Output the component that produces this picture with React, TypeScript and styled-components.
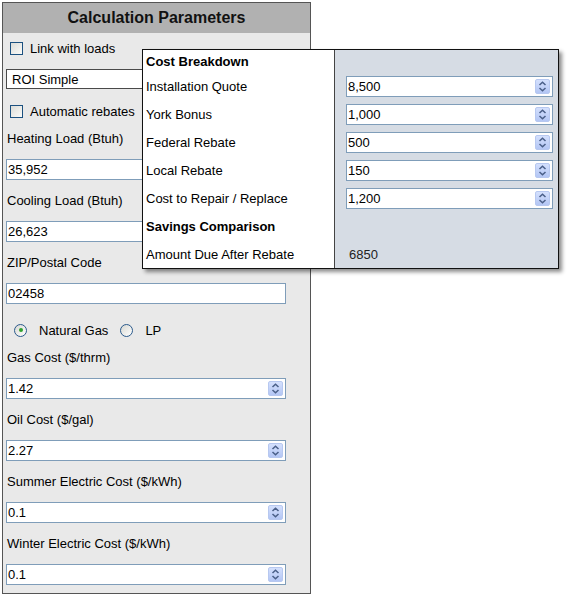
import { Fragment } from 'react';
import styled, { createGlobalStyle } from 'styled-components';

const GlobalStyle = createGlobalStyle`
  body {
    margin: 0;
    background: #fff;
    font-family: "Liberation Sans", Arial, sans-serif;
    font-size: 13px;
    color: #000;
  }
`;

const Page = styled.div`
  position: relative;
  width: 568px;
  height: 597px;
  overflow: hidden;
`;

const ParamsPanel = styled.div`
  margin: 2px 0 0 2px;
  width: 309px;
  box-sizing: border-box;
  border: 1px solid #555;
  background: #e9e9e9;
`;

const PanelHeader = styled.div`
  height: 30px;
  background: #b1b1b1;
  display: flex;
  align-items: center;
  justify-content: center;
  font-size: 16px;
  font-weight: bold;
  color: #111;
`;

const PanelBody = styled.div`
  padding: 0 3px;
`;

const CheckRow = styled.label<{ $height: number; $top?: number }>`
  display: flex;
  align-items: center;
  height: ${(p) => p.$height}px;
  margin-top: ${(p) => p.$top || 0}px;
  padding-left: 4px;
  gap: 7px;
`;

const CheckBox = styled.span`
  width: 13px;
  height: 13px;
  box-sizing: border-box;
  border: 1px solid #1c5180;
  background: linear-gradient(135deg, #dcdcd7, #fbfbf9);
`;

const SelectBox = styled.div`
  margin-top: 5px;
  width: 280px;
  height: 20px;
  box-sizing: border-box;
  border: 1px solid #4a4a4a;
  background: #fff;
  display: flex;
  align-items: center;
  padding-left: 5px;
`;

const Spacer = styled.div`
  height: 3px;
`;

const Field = styled.div`
  margin-bottom: 11px;
  &:last-child {
    margin-bottom: 8px;
  }
`;

const FieldLabel = styled.div`
  height: 20px;
  line-height: 20px;
  margin-bottom: 10px;
  padding-left: 1px;
`;

const NumberBox = styled.div<{ $width: number }>`
  display: flex;
  align-items: center;
  width: ${(p) => p.$width}px;
  height: 21px;
  box-sizing: border-box;
  border: 1px solid #7f9db9;
  background: #fff;
  padding-right: 2px;
`;

const NumberInput = styled.input`
  flex: 1;
  min-width: 0;
  height: 100%;
  border: none;
  outline: none;
  background: transparent;
  padding: 0 0 0 1px;
  font: inherit;
  color: #000;
`;

const SpinButton = styled.span`
  display: flex;
  align-items: center;
  justify-content: center;
  width: 15px;
  height: 15px;
  box-sizing: border-box;
  border: 1px solid #b7c8f0;
  border-radius: 2px;
  background: linear-gradient(#d4e0fd, #b3c6f4);
`;

const RadioRow = styled.div`
  display: flex;
  align-items: center;
  height: 30px;
  margin-bottom: 3px;
  padding-left: 8px;
`;

const Radio = styled.span<{ $checked?: boolean }>`
  position: relative;
  width: 13px;
  height: 13px;
  box-sizing: border-box;
  border-radius: 50%;
  border: 1px solid #2a5a8c;
  background: linear-gradient(135deg, #d8d8d2, #ffffff);
  margin-right: 12px;
  &::after {
    content: '';
    display: ${(p) => (p.$checked ? 'block' : 'none')};
    position: absolute;
    left: 3.5px;
    top: 3.5px;
    width: 4px;
    height: 4px;
    border-radius: 50%;
    background: #2fa12f;
  }
`;

const RadioLabel = styled.span`
  margin-right: 12px;
`;

/* floating cost breakdown sheet */
const Breakdown = styled.div`
  position: absolute;
  left: 142px;
  top: 49px;
  width: 417px;
  height: 220px;
  box-sizing: border-box;
  border: 1px solid #111;
  background: #d6dce4;
  box-shadow: 3px 3px 4px rgba(0, 0, 0, 0.45);
  display: grid;
  grid-template-columns: 191px 1fr;
  grid-template-rows: 22px repeat(6, 28px) 1fr;
`;

const NameCell = styled.div<{ $bold?: boolean }>`
  background: #fff;
  display: flex;
  align-items: center;
  padding-left: 3px;
  font-weight: ${(p) => (p.$bold ? 'bold' : 'normal')};
`;

const ValueCell = styled.div<{ $inset?: number }>`
  border-left: 1px solid #444;
  display: flex;
  align-items: center;
  padding-left: ${(p) => p.$inset ?? 11}px;
  color: #222;
`;

const Spinner = () => (
  <SpinButton>
    <svg width="9" height="11" viewBox="0 0 9 11">
      <path d="M1.5 4 L4.5 1.2 L7.5 4" fill="none" stroke="#4a5f88" strokeWidth="1.5" />
      <path d="M1.5 7 L4.5 9.8 L7.5 7" fill="none" stroke="#4a5f88" strokeWidth="1.5" />
    </svg>
  </SpinButton>
);

const NumberField = ({ value, width, spin = true }: { value: string; width: number; spin?: boolean }) => (
  <NumberBox $width={width}>
    <NumberInput readOnly value={value} />
    {spin && <Spinner />}
  </NumberBox>
);

const panelFields = [
  { label: 'Heating Load (Btuh)', value: '35,952' },
  { label: 'Cooling Load (Btuh)', value: '26,623' },
  { label: 'ZIP/Postal Code', value: '02458', spin: false },
];

const costFields = [
  { label: 'Gas Cost ($/thrm)', value: '1.42' },
  { label: 'Oil Cost ($/gal)', value: '2.27' },
  { label: 'Summer Electric Cost ($/kWh)', value: '0.1' },
  { label: 'Winter Electric Cost ($/kWh)', value: '0.1' },
];

const breakdown = [
  { label: 'Installation Quote', value: '8,500' },
  { label: 'York Bonus', value: '1,000' },
  { label: 'Federal Rebate', value: '500' },
  { label: 'Local Rebate', value: '150' },
  { label: 'Cost to Repair / Replace', value: '1,200' },
];

export default function App() {
  return (
    <Page>
      <GlobalStyle />
      <ParamsPanel>
        <PanelHeader>Calculation Parameters</PanelHeader>
        <PanelBody>
          <CheckRow $height={31}>
            <CheckBox />
            Link with loads
          </CheckRow>
          <SelectBox>ROI Simple</SelectBox>
          <CheckRow $height={30} $top={7}>
            <CheckBox />
            Automatic rebates
          </CheckRow>
          <Spacer />
          {panelFields.map((f) => (
            <Field key={f.label}>
              <FieldLabel>{f.label}</FieldLabel>
              <NumberField value={f.value} width={280} spin={f.spin !== false} />
            </Field>
          ))}
          <RadioRow>
            <Radio $checked />
            <RadioLabel>Natural Gas</RadioLabel>
            <Radio />
            <RadioLabel>LP</RadioLabel>
          </RadioRow>
          {costFields.map((f) => (
            <Field key={f.label}>
              <FieldLabel>{f.label}</FieldLabel>
              <NumberField value={f.value} width={280} />
            </Field>
          ))}
        </PanelBody>
      </ParamsPanel>

      <Breakdown>
        <NameCell $bold>Cost Breakdown</NameCell>
        <ValueCell />
        {breakdown.map((row) => (
          <Fragment key={row.label}>
            <NameCell>{row.label}</NameCell>
            <ValueCell>
              <NumberField value={row.value} width={207} />
            </ValueCell>
          </Fragment>
        ))}
        <NameCell $bold>Savings Comparison</NameCell>
        <ValueCell />
        <NameCell>Amount Due After Rebate</NameCell>
        <ValueCell $inset={14}>6850</ValueCell>
      </Breakdown>
    </Page>
  );
}
